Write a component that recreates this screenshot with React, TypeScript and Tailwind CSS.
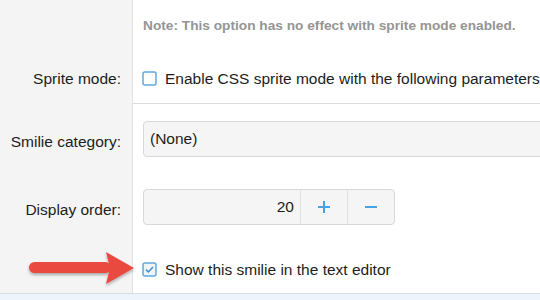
import React from "react";

const font = { fontFamily: '"Liberation Sans", Arial, Helvetica, sans-serif' };

function Row({ label, children, contentClass = "", labelClass = "" }: { label?: string; children?: React.ReactNode; contentClass?: string; labelClass?: string }) {
  return (
    <div className="flex">
      <div className={"w-[133px] shrink-0 bg-[#f4f4f4] border-r border-[#e2e2e2] flex justify-end pr-[11px] text-[15.5px] text-[#1d1d1d] " + labelClass}>
        {label}
      </div>
      <div className={"flex-1 min-w-0 bg-white " + contentClass}>{children}</div>
    </div>
  );
}

function Box({ checked }: { checked?: boolean }) {
  return (
    <svg width="15" height="15" viewBox="0 0 15 15" className="shrink-0 mr-[8px]">
      <rect x="1" y="1" width="13" height="13" rx="2" fill={checked ? "#eef6fc" : "#fff"} stroke="#62a8de" strokeWidth="1.5" />
      {checked && <path d="M4 7.6l2.4 2.4 4.6-5" fill="none" stroke="#3d8fd1" strokeWidth="1.5" />}
    </svg>
  );
}

export default function App() {
  return (
    <div className="relative w-[540px] h-[300px] overflow-hidden bg-white" style={font}>
      <Row contentClass="h-[54px] pl-[10px] pt-[16px]">
        <div className="text-[13.7px] font-bold text-[#959595] whitespace-nowrap">Note: This option has no effect with sprite mode enabled.</div>
      </Row>
      <Row label="Sprite mode:" labelClass="h-[50px] pt-[13px]" contentClass="h-[50px] border-b border-[#dcdcdc] pl-[9px] pt-[13px]">
        <div className="flex items-center whitespace-nowrap text-[15.5px] text-[#1d1d1d]">
          <Box />
          Enable CSS sprite mode with the following parameters:
        </div>
      </Row>
      <Row label="Smilie category:" labelClass="h-[70px] pt-[26px]" contentClass="h-[70px] pl-[10px] pt-[17px]">
        <div className="h-[36px] w-[420px] border border-[#d8d8d8] rounded-[4px] bg-[#f5f5f5] flex items-center pl-[6px] text-[15.5px] text-[#1d1d1d]">
          (None)
        </div>
      </Row>
      <Row label="Display order:" labelClass="h-[67px] pt-[24px]" contentClass="h-[67px] pl-[10px] pt-[15px]">
        <div className="flex h-[36px] w-[252px] border border-[#d8d8d8] rounded-[4px] bg-[#f5f5f5] text-[15.5px] text-[#1d1d1d]">
          <div className="w-[157px] flex items-center justify-end pr-[6px] border-r border-[#e0e0e0]">20</div>
          <div className="w-[47px] flex items-center justify-center border-r border-[#e0e0e0]">
            <svg width="14" height="14" viewBox="0 0 14 14"><path d="M7 1v12M1 7h12" stroke="#47a3e6" strokeWidth="2" /></svg>
          </div>
          <div className="flex-1 flex items-center justify-center">
            <svg width="14" height="14" viewBox="0 0 14 14"><path d="M1 7h12" stroke="#47a3e6" strokeWidth="2" /></svg>
          </div>
        </div>
      </Row>
      <Row labelClass="h-[52px]" contentClass="h-[52px] pl-[9px] pt-[17px]">
        <div className="flex items-center whitespace-nowrap text-[15.5px] text-[#1d1d1d]">
          <Box checked />
          Show this smilie in the text editor
        </div>
      </Row>
      <div className="h-[1px] bg-[#d5dde6]" />
      <div className="h-[20px] bg-[#edf4fb]" />
      <svg className="absolute left-0 top-0 pointer-events-none" width="540" height="300" viewBox="0 0 540 300">
        <defs>
          <filter id="sh" x="-20%" y="-40%" width="140%" height="180%">
            <feDropShadow dx="0" dy="2" stdDeviation="1.5" floodColor="#000" floodOpacity="0.3" />
          </filter>
        </defs>
        <g filter="url(#sh)" fill="#ea4a3f">
          <rect x="29" y="262" width="82" height="11" rx="5.5" />
          <path d="M106 252 L134 268 L106 284 L110 268 Z" />
        </g>
      </svg>
    </div>
  );
}
